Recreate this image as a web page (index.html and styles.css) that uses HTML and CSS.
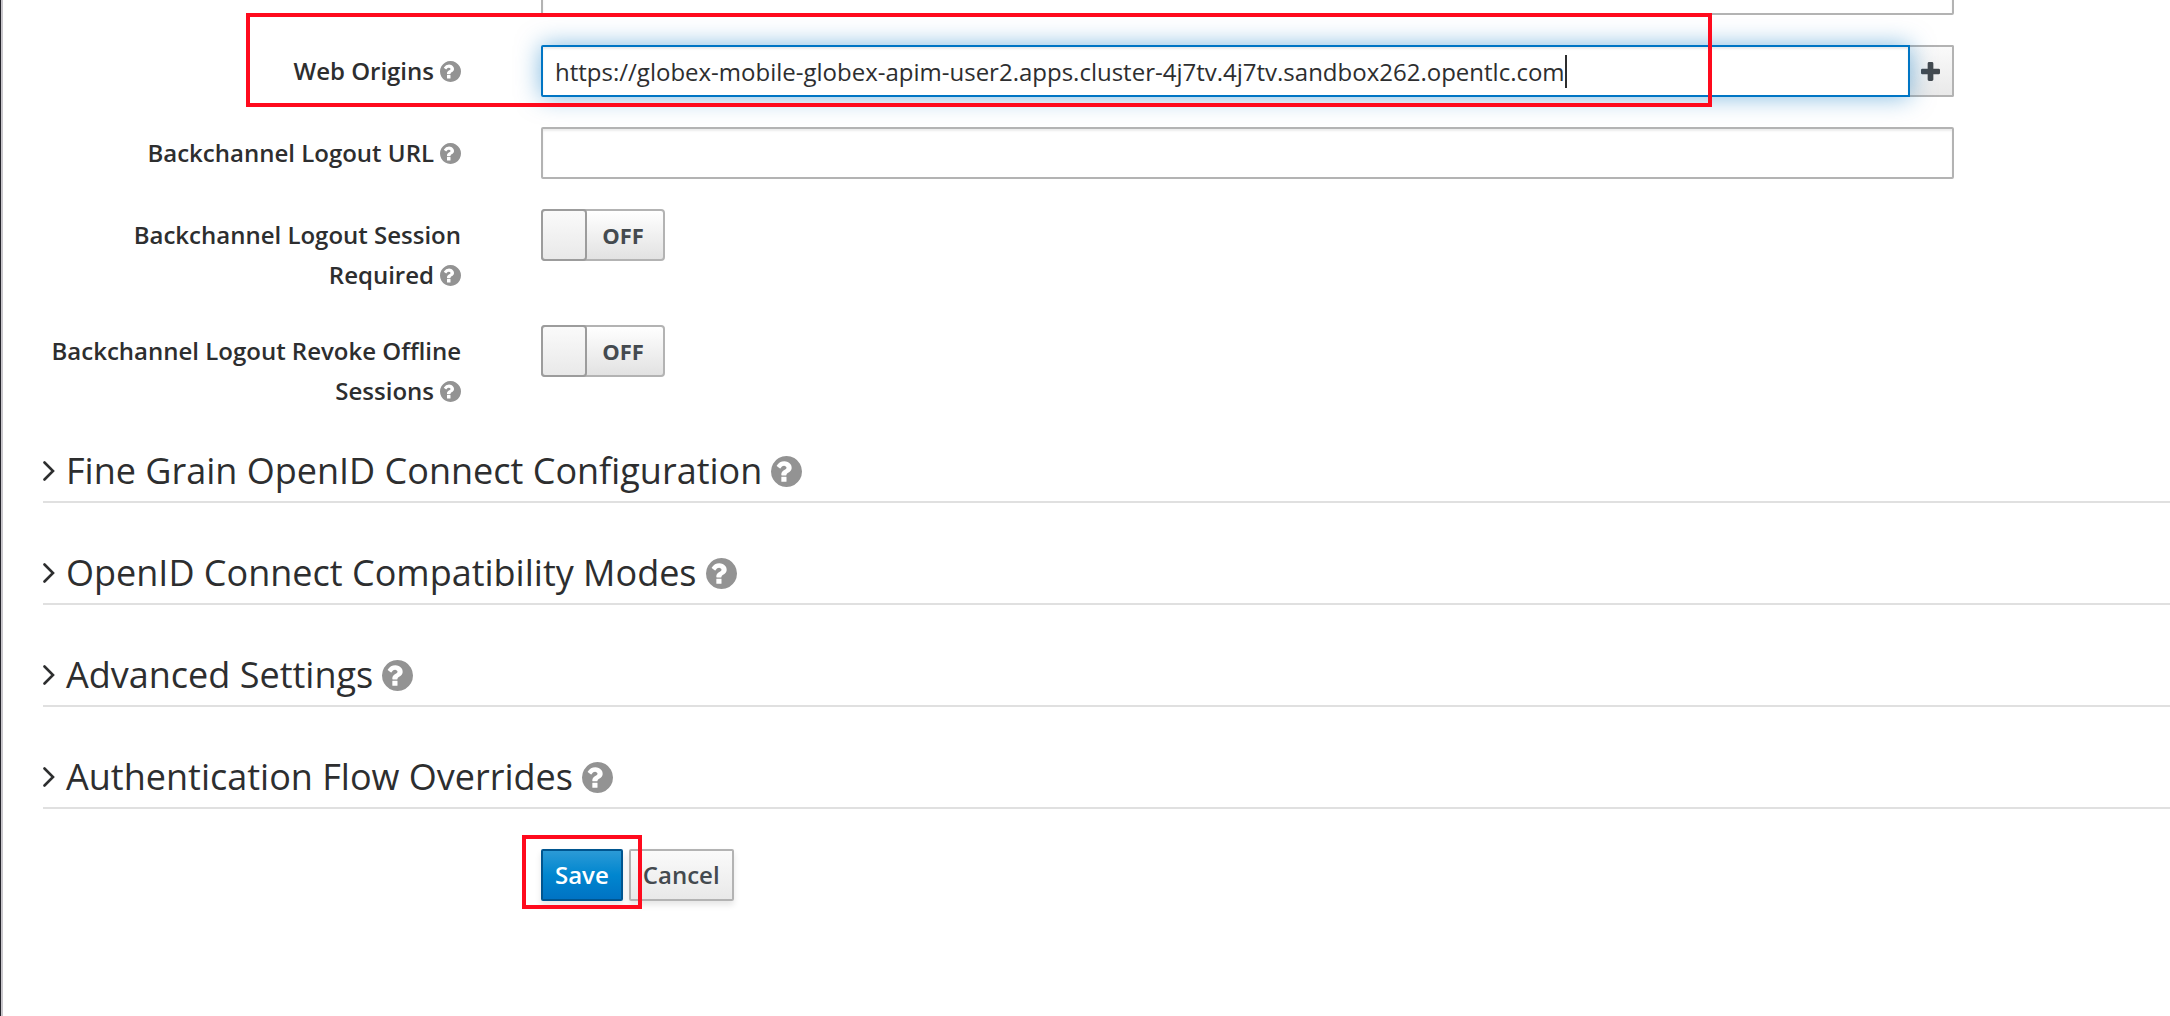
FILE: index.html
```html
<!DOCTYPE html>
<html lang="en">
<head>
<meta charset="utf-8">
<title>Client settings</title>
<link rel="stylesheet" href="styles.css">
</head>
<body>
<svg class="sprite" aria-hidden="true">
  <symbol id="help" viewBox="128 128 1536 1536"><path d="M896 1376v-192q0-14-9-23t-23-9H672q-14 0-23 9t-9 23v192q0 14 9 23t23 9h192q14 0 23-9t9-23zm256-672q0-88-55.500-163T958 425t-170-41q-243 0-371 213-15 24 8 42l132 100q7 6 19 6 16 0 25-12 53-68 86-92 34-24 86-24 48 0 85.500 26t37.500 59q0 38-20 61t-68 45q-63 28-115.500 86.500T640 1020v36q0 14 9 23t23 9h192q14 0 23-9t9-23q0-19 21.500-49.500T972 957q32-18 49-28.500t46-35 44.500-48 28-60.500 12.500-81zm512 192q0 209-103 385.500T1281.500 1561 896 1664t-385.500-103T231 1281.500 128 896t103-385.500T510.500 231 896 128t385.500 103T1561 510.500 1664 896z"/></symbol>
  <symbol id="chevron" viewBox="0 0 12 20"><path d="M1.500 1.500 10 10l-8.500 8.500" fill="none" stroke="currentColor" stroke-width="2.600" stroke-linecap="round"/></symbol>
</svg>
<main class="page">
  <form class="form">
    <div class="row">
      <div></div>
      <input class="text-input" type="text" aria-label="Redirect URI">
    </div>
    <div class="row">
      <label class="label" for="origins">Web Origins<svg class="help"><use href="#help"/></svg></label>
      <div class="input-group">
        <input class="text-input focused" id="origins" type="text" value="https://globex-mobile-globex-apim-user2.apps.cluster-4j7tv.4j7tv.sandbox262.opentlc.com">
        <button class="add" type="button" aria-label="Add"><svg class="plus" viewBox="0 0 20 20"><path d="M8.500 0h3q1.500 0 1.500 1.500V7h5.500Q20 7 20 8.500v3q0 1.500-1.500 1.500H13v5.500q0 1.500-1.500 1.500h-3Q7 20 7 18.500V13H1.500Q0 13 0 11.500v-3Q0 7 1.500 7H7V1.500Q7 0 8.500 0z"/></svg></button>
        <span class="caret"></span>
      </div>
      <span class="mark mark-origins"></span>
    </div>
    <div class="row">
      <label class="label" for="logout">Backchannel Logout URL<svg class="help"><use href="#help"/></svg></label>
      <input class="text-input" id="logout" type="text">
    </div>
    <div class="row">
      <label class="label" for="session">Backchannel Logout Session Required<svg class="help"><use href="#help"/></svg></label>
      <div class="switch"><input class="knob" id="session" type="checkbox"><span class="state">OFF</span></div>
    </div>
    <div class="row">
      <label class="label" for="revoke">Backchannel Logout Revoke Offline Sessions<svg class="help"><use href="#help"/></svg></label>
      <div class="switch"><input class="knob" id="revoke" type="checkbox"><span class="state">OFF</span></div>
    </div>
    <div class="sections">
      <h2 class="section"><button class="toggle" type="button"><svg class="chevron"><use href="#chevron"/></svg>Fine Grain OpenID Connect Configuration</button><svg class="help-large"><use href="#help"/></svg></h2>
      <h2 class="section"><button class="toggle" type="button"><svg class="chevron"><use href="#chevron"/></svg>OpenID Connect Compatibility Modes</button><svg class="help-large"><use href="#help"/></svg></h2>
      <h2 class="section"><button class="toggle" type="button"><svg class="chevron"><use href="#chevron"/></svg>Advanced Settings</button><svg class="help-large"><use href="#help"/></svg></h2>
      <h2 class="section"><button class="toggle" type="button"><svg class="chevron"><use href="#chevron"/></svg>Authentication Flow Overrides</button><svg class="help-large"><use href="#help"/></svg></h2>
    </div>
    <div class="row actions-row">
      <div></div>
      <div class="actions">
        <button class="btn primary" type="submit">Save</button>
        <button class="btn" type="button">Cancel</button>
        <span class="mark mark-save"></span>
      </div>
    </div>
  </form>
</main>
</body>
</html>
```
FILE: styles.css
```css
* { box-sizing: border-box; }

body {
  margin: 0;
  background: #fff;
  color: #2d2e2f;
  font: 24px/40px "Open Sans", "Noto Sans", sans-serif;
}

button, input { margin: 0; font: inherit; color: inherit; }

.sprite { position: absolute; width: 0; height: 0; }

.page {
  min-height: 100vh;
  border-left: 1px solid #25252c;
  box-shadow: inset 2px 0 #c9c7cc;
  padding-left: 42px;
  overflow: hidden;
}

/* The form is scrolled: its first field starts above the window. */
.form {
  display: flex;
  flex-direction: column;
  gap: 30px;
  margin-top: -37px;
}

.row {
  position: relative;
  display: grid;
  grid-template-columns: 418fr 1413fr 136fr;
  column-gap: 80px;
  align-items: start;
}

.label {
  padding-top: 6px;
  font-weight: 600;
  text-align: right;
}

.help {
  width: 21px;
  height: 21px;
  margin-left: 6px;
  vertical-align: -2px;
  fill: #939393;
}

.text-input {
  width: 100%;
  height: 52px;
  padding: 0 12px;
  border: 2px solid #b3b3b3;
  border-radius: 2px;
  background: #fff;
  box-shadow: inset 0 2px 2px rgba(3, 3, 3, 0.08);
  outline: 0;
}

.input-group { position: relative; display: flex; }

.focused {
  position: relative;
  z-index: 1;
  flex: 1;
  border-color: #0075c4;
  border-radius: 2px 0 0 2px;
  box-shadow: inset 0 2px 2px rgba(3, 3, 3, 0.08), 0 0 24px rgba(0, 117, 196, 0.5);
}

.add {
  display: flex;
  align-items: center;
  justify-content: center;
  width: 44px;
  height: 52px;
  padding: 0 2px 0 0;
  border: 2px solid #b3b3b3;
  border-left: 0;
  border-radius: 0 2px 2px 0;
  background: linear-gradient(#fafafa, #e9e9e9);
}

.plus { width: 19px; height: 19px; fill: #444a4f; }

.caret {
  position: absolute;
  z-index: 2;
  top: 10px;
  left: 1024px;
  width: 2px;
  height: 33px;
  background: #2d2e2f;
}

.switch {
  display: flex;
  width: 124px;
  height: 52px;
  border: 2px solid #b3b3b3;
  border-radius: 4px;
  background: linear-gradient(#fff, #e2e2e2);
}

.knob {
  appearance: none;
  width: 46px;
  height: 52px;
  margin: -2px 0 -2px -2px;
  border: 2px solid #9c9c9c;
  border-radius: 4px;
  background: linear-gradient(#fafafa, #e9e9e9);
}

.state {
  flex: 1;
  padding-right: 4px;
  color: #444a4f;
  font-size: 22px;
  font-weight: 700;
  line-height: 48px;
  text-align: center;
}

.sections { display: flex; flex-direction: column; gap: 40px; }

.section {
  display: flex;
  align-items: center;
  gap: 9px;
  height: 62px;
  margin: 0;
  border-bottom: 2px solid #e0e0e0;
  font-size: 36px;
  font-weight: 400;
}

.toggle {
  display: flex;
  align-items: center;
  gap: 11px;
  padding: 0;
  border: 0;
  background: none;
}

.chevron { width: 12px; height: 20px; }

.help-large { width: 31px; height: 31px; fill: #939393; }

.actions-row { margin-top: 10px; }

.actions { position: relative; display: flex; gap: 6px; }

.btn {
  height: 52px;
  padding: 0 12px;
  border: 2px solid #b3b3b3;
  border-radius: 2px;
  background: linear-gradient(#fafafa, #e9e9e9);
  box-shadow: 0 4px 6px rgba(3, 3, 3, 0.1);
  color: #444a4f;
  font-weight: 600;
  line-height: 48px;
}

.primary {
  border-color: #00558f;
  background: linear-gradient(#2b9ad6, #0086cf 50%, #0073c3);
  color: #fff;
}

/* Red highlight frames over the form */
.mark {
  position: absolute;
  z-index: 3;
  border: 4px solid #ff0a1d;
  pointer-events: none;
}

.mark-origins { top: -32px; right: 458px; left: 203px; height: 94px; }

.mark-save { top: -14px; left: -19px; width: 120px; height: 74px; }
```
